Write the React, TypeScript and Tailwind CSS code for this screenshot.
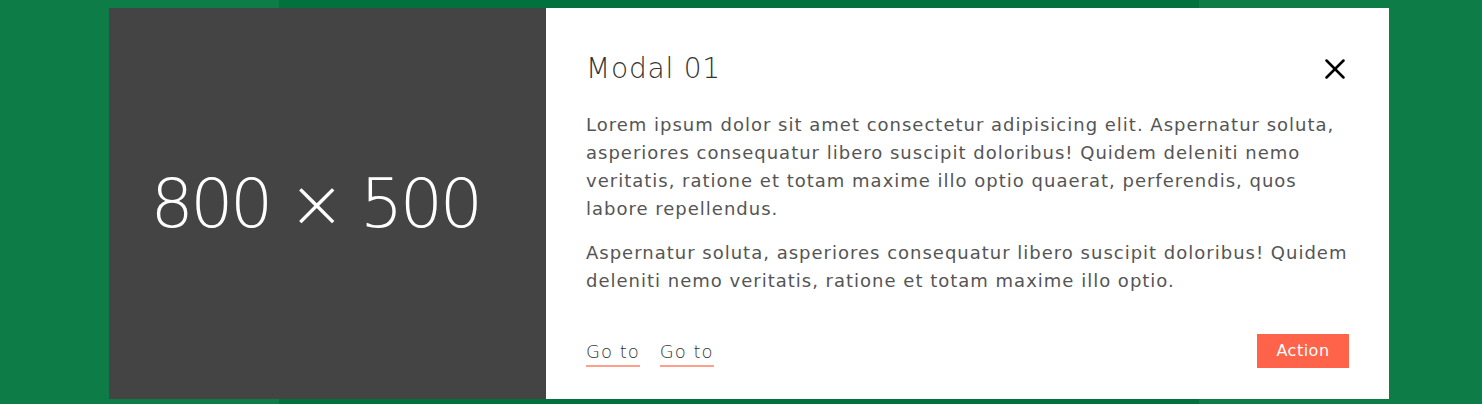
import { X } from "lucide-react";

const body = "font-['DejaVu_Sans',sans-serif]";

function ImagePlaceholder() {
  return (
    <div className="w-[437px] shrink-0 bg-[#444444] flex items-center justify-center pr-[25px]">
      <span className={`${body} font-extralight text-[68px] text-white tracking-[-3.4px]`}>800 × 500</span>
    </div>
  );
}

function Modal() {
  return (
    <div className="absolute left-[109px] top-[8px] w-[1280px] h-[391px] flex bg-white">
      <ImagePlaceholder />
      <div className={`${body} flex-1 flex flex-col px-10 pt-[41px] pb-[31px] text-[#555]`}>
        <div className="flex items-center justify-between h-[40px]">
          <h2 className="text-[28px] font-extralight text-[#333] tracking-[0.8px] leading-[40px]">Modal 01</h2>
          <button className="text-black -mr-[3px]" aria-label="Close">
            <X size={34} strokeWidth={1.8} />
          </button>
        </div>
        <p className="mt-[22px] text-[18px] leading-[28px] tracking-[1px]">
          Lorem ipsum dolor sit amet consectetur adipisicing elit. Aspernatur soluta, asperiores consequatur libero suscipit doloribus! Quidem deleniti nemo veritatis, ratione et totam maxime illo optio quaerat, perferendis, quos labore repellendus.
        </p>
        <p className="mt-4 text-[18px] leading-[28px] tracking-[1px]">
          Aspernatur soluta, asperiores consequatur libero suscipit doloribus! Quidem deleniti nemo veritatis, ratione et totam maxime illo optio.
        </p>
        <div className="mt-auto flex items-center justify-between">
          <div className="flex gap-5 mt-[4px] text-[18px] text-[#333] font-light tracking-[1px]">
            <a className="border-b-2 border-[#ffa08c] leading-[26px]">Go to</a>
            <a className="border-b-2 border-[#ffa08c] leading-[26px]">Go to</a>
          </div>
          <button className="w-[92px] h-[34px] bg-[#ff634a] text-white text-[16px] tracking-[0.5px]">Action</button>
        </div>
      </div>
    </div>
  );
}

export default function App() {
  return (
    <div className="relative w-full h-[404px] bg-[#0e7c46] overflow-hidden">
      <div className="ml-[279px] w-[920px] h-full bg-[#01713d]" />
      <Modal />
    </div>
  );
}
